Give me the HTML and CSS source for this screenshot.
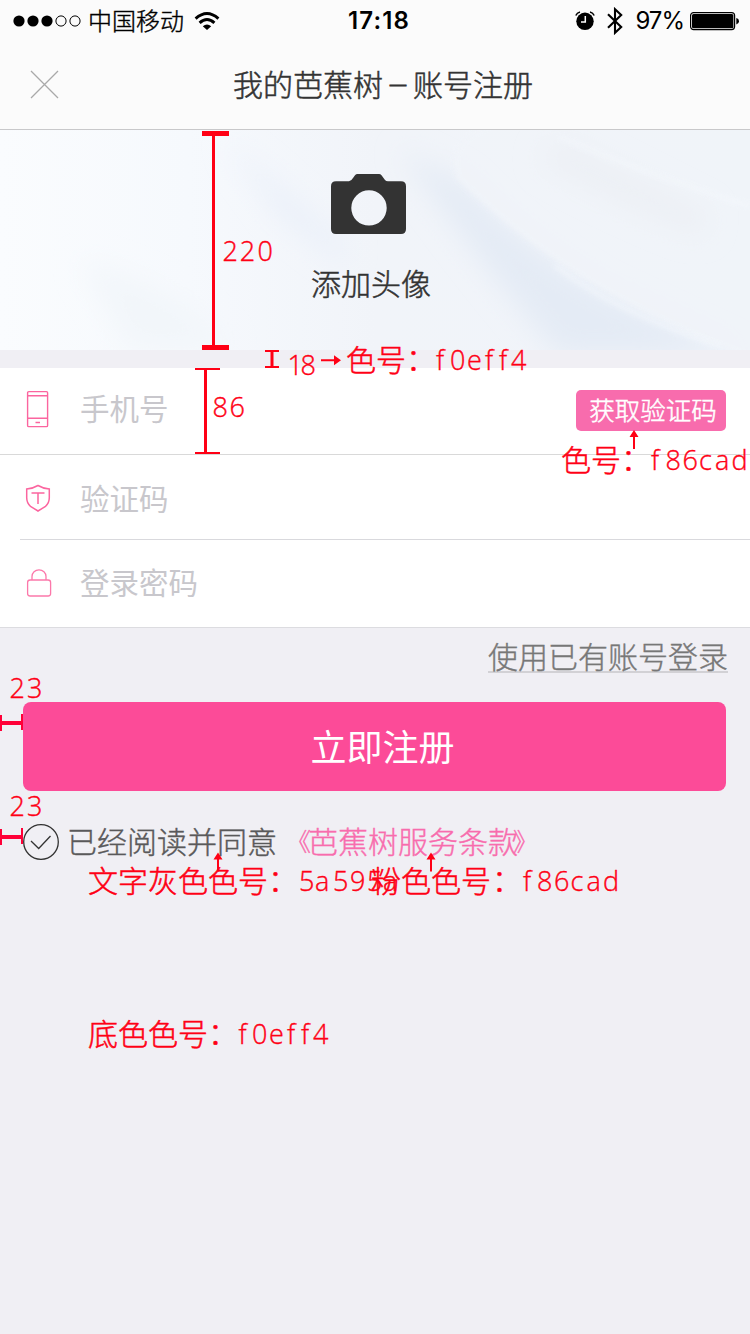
FILE: index.html
```html
<!DOCTYPE html>
<html lang="zh-CN">
<head>
<meta charset="utf-8">
<title>我的芭蕉树 - 账号注册</title>
<link rel="stylesheet" href="styles.css">
</head>
<body>
<main class="screen">
  <header class="header">
    <div class="status">
      <div class="status-left">
        <svg class="signal" width="68" height="12" viewBox="0 0 68 12"><circle cx="6" cy="6" r="5.6"/><circle cx="20" cy="6" r="5.6"/><circle cx="34" cy="6" r="5.6"/><g fill="none" stroke="#000"><circle cx="48" cy="6" r="5.1"/><circle cx="62" cy="6" r="5.1"/></g></svg>
        <span class="carrier">中国移动</span>
        <svg class="wifi" width="26" height="20" viewBox="0 0 26 20"><g fill="none" stroke="#000" stroke-width="3"><path d="M1.6 7.6Q13-2.6 24.4 7.6"/><path d="M5.6 11.8Q13 5.2 20.4 11.8"/></g><path d="M8.800 15.200Q13 11.600 17.200 15.200L13 19Z"/></svg>
      </div>
      <span class="clock">17:18</span>
      <div class="status-right">
        <svg width="20" height="20" viewBox="0 0 20 20"><circle cx="10" cy="10.300" r="8.700"/><path d="M.8 4.500Q2 1.600 5 .9M19.200 4.500Q18 1.600 15 .9" fill="none" stroke="#000" stroke-width="1.500"/><path d="M10.300 5v6H6" fill="none" stroke="#fff" stroke-width="1.500"/></svg>
        <svg class="bluetooth" width="16" height="28" viewBox="0 0 16 28"><path d="M1 7.200 14.200 20 8 25.800V2.200L14.200 8 1 20.800" fill="none" stroke="#000" stroke-width="2.100"/></svg>
        <span class="percent">97%</span>
        <svg class="battery" width="50" height="20" viewBox="0 0 50 20"><rect x=".6" y="1.600" width="44" height="17" rx="3" fill="none" stroke="#000" stroke-width="1.200"/><rect x="2" y="3" width="41.400" height="14.200" rx="1.500"/><path d="M46.300 7q2.700.6 2.700 3.200t-2.700 3.200Z"/></svg>
      </div>
    </div>
    <div class="nav">
      <svg class="close" width="29" height="29" viewBox="0 0 29 29"><path d="m1 1 27 27M28 1 1 28" stroke="#a9a9a9" stroke-width="1.300"/></svg>
      <h1 class="title">我的芭蕉树<span class="dash">－</span>账号注册</h1>
    </div>
  </header>

  <section class="hero">
    <svg class="silk" viewBox="0 0 750 220" preserveAspectRatio="none">
      <defs>
        <linearGradient id="sky"><stop stop-color="#fafcfe"/><stop offset=".25" stop-color="#f6f9fd"/><stop offset=".5" stop-color="#f1f4f9"/><stop offset="1" stop-color="#f0f4fa"/></linearGradient>
        <filter id="wide" x="-30%" y="-30%" width="160%" height="160%"><feGaussianBlur stdDeviation="14"/></filter>
        <filter id="fine" x="-20%" y="-20%" width="140%" height="140%"><feGaussianBlur stdDeviation="2.500"/></filter>
      </defs>
      <rect width="750" height="220" fill="url(#sky)"/>
      <path d="M225 10 300 75 350 120 340 130 280 85Z" fill="#e9eff9" filter="url(#wide)"/>
      <path d="M80 130Q190 160 230 220H130Z" fill="#f2f6fa" filter="url(#wide)"/>
      <path d="M400 20 460 50Q530 120 600 160L740 225H560Q480 135 400 20Z" fill="#e4ebf5" filter="url(#wide)"/>
      <path d="M458 50Q570 160 735 222L760 230V-10H520Q440 0 458 50Z" fill="#f1f4f9" filter="url(#fine)" opacity=".85"/>
      <path d="M560 10Q660 60 710 85L700 105Q620 75 540 30Z" fill="#eceff4" filter="url(#wide)"/>
      <path d="M560 7Q640 42 750 76M555 136Q620 185 720 216" fill="none" stroke="#f6f9fd" stroke-width="3" filter="url(#fine)" opacity=".7"/>
    </svg>
    <div class="avatar">
      <svg class="camera" width="75" height="60" viewBox="0 0 75 60"><path fill="#333" fill-rule="evenodd" d="M5 7.300H18Q20.300 7 22 4L24 1.200Q25 0 26.500 0H48Q49.500 0 50.500 1.200L54 6Q55 7.300 57 7.300H70Q75 7.300 75 12.300V55Q75 60 70 60H5Q0 60 0 55V12.300Q0 7.300 5 7.300ZM38 16.200A17.700 17.700 0 1 0 38 51.600A17.700 17.700 0 1 0 38 16.200Z"/></svg>
      <span class="avatar-label">添加头像</span>
    </div>
  </section>

  <section class="form">
    <div class="row row-phone">
      <svg class="icon" width="30" height="38" viewBox="0 0 30 38" fill="none" stroke="#fb659f" stroke-width="1.400"><rect x="4.600" y="1.600" width="20" height="35" rx="1.200"/><path d="M4.600 5.700h20M4.600 28.300h20M12.500 32.500h4.500"/></svg>
      <span class="placeholder">手机号</span>
      <button class="code-button">获取验证码</button>
    </div>
    <div class="row row-code">
      <svg class="icon" width="30" height="30" viewBox="0 0 30 30" fill="none" stroke="#fb659f" stroke-width="1.500"><path d="M15 2.500Q20 5.500 26.300 6V14Q26.500 20 22.500 23.300L15 28 7.500 23.300Q3.500 20 3.700 14V6Q10 5.500 15 2.500ZM8.500 10h13M15 10v11"/></svg>
      <span class="placeholder">验证码</span>
    </div>
    <div class="row row-password">
      <svg class="icon" width="30" height="30" viewBox="0 0 30 30" fill="none" stroke="#fc78aa" stroke-width="1.300"><rect x="4.600" y="12" width="23" height="16" rx="2.500"/><path d="M9 12V8.500A7 6.700 0 0 1 23 8.500V12"/></svg>
      <span class="placeholder">登录密码</span>
    </div>
  </section>

  <section class="actions">
    <a class="login-link">使用已有账号登录</a>
    <button class="submit">立即注册</button>
    <div class="terms">
      <svg width="36" height="36" viewBox="0 0 36 36" fill="none" stroke="#333" stroke-width="1.300"><circle cx="18" cy="18" r="17.300"/><path d="m8 17 7.700 7.500L27.500 12"/></svg>
      <span class="agree">已经阅读并同意</span>
      <a class="terms-link"><span class="quote quote-open">《</span>芭蕉树服务条款<span class="quote quote-close">》</span></a>
    </div>
  </section>

  <svg class="notes" viewBox="0 0 750 1334">
    <g fill="#ff0015">
      <path d="M202 131h27v5h-27zM202 345h27v5h-27zM212 133h3v214h-3z"/>
      <path d="M265 350h14v2h-14zM265 366h14v2h-14zM270.500 351h3v16h-3z"/>
      <path d="M195 368h25v2h-25zM195 452h25v2h-25zM204 369h3v84h-3z"/>
      <path d="M321 359.200h13v-4l7 5-7 5v-4h-13z"/>
      <path d="M634 430l4.500 7h-3.500v12h-2v-12h-3.500zM218 852.500l4.500 7h-3.500v12h-2v-12h-3.500zM431 852.500l4.500 7h-3.500v12h-2v-12h-3.500z"/>
    </g>
    <path fill="#ff0038" d="M0 715h2v6h19v-7h2v16h-2v-5H2v6H0zM0 829h2v6h19v-7h2v16h-2v-5H2v6H0z"/>
    <g class="note-code">
      <text x="222.500 239.800 257.500" y="261">220</text>
      <text x="287.500 300.500" y="374.500">18</text>
      <text x="212.500 229.500" y="417">86</text>
      <text x="9.500 27" y="698">23</text>
      <text x="9.500 27" y="816">23</text>
      <text x="436 450 467 485 499 511" y="369.500">f0eff4</text>
      <text x="651 665.500 682.500 699 715 731.500" y="470">f86cad</text>
      <text x="299 315 333 350 367 383" y="891">5a595a</text>
      <text x="523 537 554 570.500 586.500 603" y="891">f86cad</text>
      <text x="238.500 252 269 287 301 313" y="1044">f0eff4</text>
    </g>
    <g class="note-text">
      <text x="346" y="371">色号</text>
      <text x="561" y="471">色号</text>
      <text x="88" y="892">文字灰色色号</text>
      <text x="371" y="892">粉色色号</text>
      <text x="88" y="1045">底色色号</text>
      <text x="406" y="370">：</text>
      <text x="621" y="470">：</text>
      <text x="268" y="891">：</text>
      <text x="492" y="891">：</text>
      <text x="208" y="1044">：</text>
    </g>
  </svg>
</main>
</body>
</html>
```

FILE: styles.css
```css
* { box-sizing: border-box; }
body { margin: 0; font-family: "Noto Sans CJK SC", sans-serif; font-weight: 300; }
button { border: 0; padding: 0; font: inherit; }
svg { display: block; flex: none; }
.screen { position: relative; width: 750px; height: 1334px; overflow: hidden; background: #f0eff4; }
.header { height: 130px; background: #fbfbfb; border-bottom: 1px solid #c8c8ca; }
.status { display: grid; grid-template-columns: 1fr auto 1fr; align-items: center; height: 41px; padding: 0 10px 0 13px; }
.status-left, .status-right { display: flex; align-items: center; }
.status-right { justify-content: flex-end; }
.carrier { margin-left: 7px; padding-bottom: 1px; font-size: 24px; line-height: 40px; font-weight: 300; -webkit-text-stroke: 0.4px #000; }
.wifi { margin-left: 10px; }
.clock { padding-left: 5px; font: 600 24px/41px Inter, sans-serif; letter-spacing: 1.1px; }
.bluetooth { margin-left: 12px; }
.percent { margin: 0 6px 0 12px; font: 400 24px/41px Inter, sans-serif; letter-spacing: -1px; }
.nav { display: grid; grid-template-columns: 200px 350px 200px; align-items: center; height: 87px; }
.close { margin-left: 30px; }
.title { margin: 0 -35px 0 0; padding: 0 0 3px 33px; font-size: 30px; line-height: 40px; font-weight: 300; color: #333; -webkit-text-stroke: 0.5px #333; }
.dash { display: inline-block; width: 30px; font-size: 22px; line-height: 30px; text-align: center; vertical-align: 3px; -webkit-text-stroke-width: 1px; }
.hero { position: relative; height: 220px; overflow: hidden; }
.silk { position: absolute; inset: 0; width: 100%; height: 100%; }
.avatar { position: relative; display: flex; flex-direction: column; align-items: center; width: 120px; margin-left: 311px; padding-top: 44px; }
.camera { margin-right: 5px; }
.avatar-label { margin-top: 27px; font-size: 30px; line-height: 42px; color: #333; -webkit-text-stroke: 0.5px #333; }
.form { margin-top: 18px; background: #fff; border-bottom: 1px solid #dcdce0; }
.row { display: flex; align-items: center; padding: 0 24px 0 23px; }
.row-phone { height: 87px; padding-bottom: 5px; border-bottom: 1px solid #d9d9d9; }
.row-code { height: 85px; margin-left: 20px; padding: 1px 24px 0 3px; border-bottom: 1px solid #d9d9dd; }
.row-password { height: 87px; padding-bottom: 2px; }
.placeholder { margin-left: 27px; padding-bottom: 4px; font-size: 29.5px; line-height: 42px; color: #c8c7cc; font-weight: 400; }
.row-phone .placeholder { padding-bottom: 3px; }
.row-code .placeholder { padding-bottom: 2px; }
.code-button { width: 150px; height: 41px; margin: 3px 0 0 auto; padding: 0 0 3px 4px; border-radius: 5px; background: #f86cad; color: #fff; font-size: 25.5px; line-height: 38px; -webkit-text-stroke: 0.5px #fff; }
.actions { display: flex; flex-direction: column; padding: 14px 24px 0 23px; }
.login-link { align-self: flex-end; margin-right: -2px; height: 31px; border-bottom: 2px solid #d2d1d5; font-size: 30px; line-height: 27px; color: #777; -webkit-text-stroke: 0.4px #777; }
.submit { height: 89px; margin-top: 29px; border-radius: 8px; background: #fc4b98; color: #fff; font-size: 36px; font-weight: 400; line-height: 86px; padding: 0 0 3px 16px; }
.terms { display: flex; align-items: center; height: 36px; margin-top: 33px; font-size: 30px; line-height: 36px; white-space: nowrap; }
.agree { margin-left: 8px; padding-bottom: 4px; color: #5a595a; -webkit-text-stroke: 0.4px #5a595a; }
.terms-link { padding-bottom: 4px; color: #f86cad; -webkit-text-stroke: 0.4px #f86cad; }
.quote { display: inline-block; width: 30px; font-size: 25px; line-height: 30px; vertical-align: 2px; }
.quote-open { margin: 0 -3px 0 4px; text-align: right; }
.quote-close { margin-left: -5px; }
.notes { position: absolute; inset: 0; width: 750px; height: 1334px; }
.note-code { fill: #ff0015; stroke: #ff0015; stroke-width: 0.4; font-family: "Open Sans", sans-serif; font-weight: 300; font-size: 27px; }
.note-text { fill: #ff0015; stroke: #ff0015; stroke-width: 0.5; font-size: 30px; }
```
